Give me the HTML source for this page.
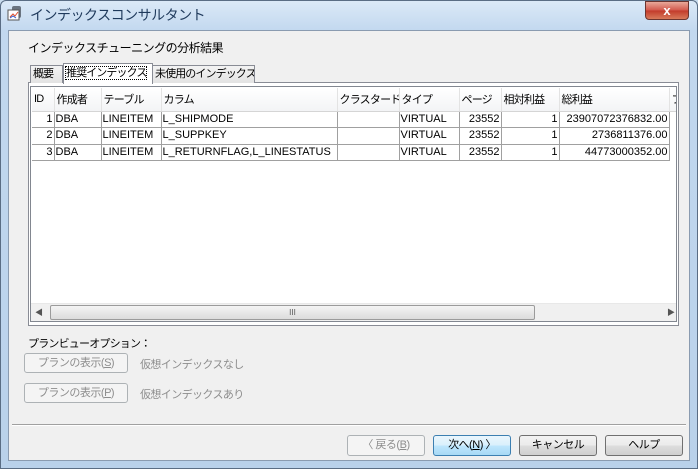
<!DOCTYPE html>
<html><head><meta charset="utf-8"><style>
*{margin:0;padding:0;box-sizing:border-box}
body{width:698px;height:469px;overflow:hidden;font-family:"Liberation Sans","Noto Sans CJK JP",sans-serif;font-size:12px;color:#000;background:#c9dcee;position:relative}
.a{position:absolute;white-space:nowrap}
.frame{left:0;top:0;width:698px;height:469px;background:linear-gradient(180deg,#dbe9f7 0,#c2d8ef 30px,#b9d1ea 100%);border:1px solid #5a6d84;border-radius:6px 6px 0 0}
.client{left:8px;top:30px;width:682px;height:431px;background:#f0f0f0;border:1px solid #8a9bb0}
.btn{border:1px solid #707070;border-radius:3px;background:linear-gradient(#f2f2f2,#ebebeb 50%,#dddddd 51%,#cfcfcf);text-align:center;line-height:18px;font-size:11px;letter-spacing:-0.5px}
.dis{border-color:#adb2b5;background:#f4f4f4;color:#8d8d8d}
.tab{top:65px;height:18px;border:1px solid #898c95;border-bottom:none;background:linear-gradient(#f3f3f3,#e3e3e3);font-size:11px;line-height:16px;padding:0 2px;letter-spacing:-0.9px;overflow:hidden}
table{border-collapse:collapse;font-size:11px;table-layout:fixed;width:667px}
td{height:16.5px;border-right:1px solid #a0a0a0;border-bottom:1px solid #a0a0a0;padding:0 1px;white-space:nowrap;line-height:15px;overflow:hidden}
th{height:23px;font-weight:normal;text-align:left;padding:0 2px;border-right:1px solid #e3e3e3;background:linear-gradient(#fff,#f3f4f6);border-bottom:1px solid #d5d5d5;white-space:nowrap;overflow:hidden;letter-spacing:-0.8px}
.r{text-align:right}
</style></head><body>
<div class="a frame"></div>
<svg class="a" style="left:7px;top:5px" width="18" height="18"><rect x="5" y="1" width="9" height="12" rx="2" fill="#6a7480"/><rect x="1" y="5" width="11" height="10" fill="#fff" stroke="#555"/><path d="M3 12 L6 9 L8 11 L11 7" stroke="#e05030" fill="none"/><path d="M3 13 L6 11 L9 13" stroke="#3060d0" fill="none"/></svg>
<div class="a" style="left:30px;top:5px;font-size:14px;color:#1e395b;letter-spacing:-0.5px">インデックスコンサルタント</div>
<div class="a" style="left:645px;top:1px;width:44px;height:19px;border:1px solid #6b3530;border-radius:0 0 4px 4px;background:linear-gradient(#e9a99a,#d2564a 50%,#c23a2a 51%,#d87a5a);color:#fff;text-align:center;font-weight:bold;font-size:13px;line-height:17px">x</div>
<div class="a client"></div>
<div class="a" style="left:28px;top:39px;letter-spacing:-0.5px">インデックスチューニングの分析結果</div>
<div class="a" style="left:28px;top:82px;width:651px;height:244px;border:1px solid #898c95;background:#fff"></div>
<div class="a tab" style="left:30px;width:33px">概要</div>
<div class="a tab" style="left:152px;width:103px">未使用のインデックス</div>
<div class="a tab" style="left:63px;top:63px;height:21px;width:90px;background:#fff;line-height:18px"><span style="outline:1px dotted #000">推奨インデックス</span></div>
<div class="a" style="left:30px;top:86px;width:647px;height:236px;border:1px solid #828790;background:#fff;overflow:hidden">
<table style="position:absolute;left:1px;top:1px">
<colgroup><col style="width:22px"><col style="width:47px"><col style="width:60px"><col style="width:176px"><col style="width:62px"><col style="width:60px"><col style="width:42px"><col style="width:58px"><col style="width:110px"><col style="width:30px"></colgroup>
<tr><th>ID</th><th>作成者</th><th>テーブル</th><th>カラム</th><th>クラスタード</th><th>タイプ</th><th>ページ</th><th>相対利益</th><th>総利益</th><th>フ</th></tr>
<tr><td class="r">1</td><td>DBA</td><td>LINEITEM</td><td>L_SHIPMODE</td><td></td><td>VIRTUAL</td><td class="r">23552</td><td class="r">1</td><td class="r">23907072376832.00</td><td style="border:none"></td></tr>
<tr><td class="r">2</td><td>DBA</td><td>LINEITEM</td><td>L_SUPPKEY</td><td></td><td>VIRTUAL</td><td class="r">23552</td><td class="r">1</td><td class="r">2736811376.00</td><td style="border:none"></td></tr>
<tr><td class="r">3</td><td>DBA</td><td>LINEITEM</td><td>L_RETURNFLAG,L_LINESTATUS</td><td></td><td>VIRTUAL</td><td class="r">23552</td><td class="r">1</td><td class="r">44773000352.00</td><td style="border:none"></td></tr>
</table>
<div class="a" style="left:0;top:216px;width:645px;height:18px;background:#f0f0f0;border-top:1px solid #e8e8e8"></div>
<div class="a" style="left:4px;top:220px;font-size:8px;color:#555">◀</div>
<div class="a" style="left:636px;top:220px;font-size:8px;color:#555">▶</div>
<div class="a" style="left:19px;top:218px;width:485px;height:15px;border:1px solid #9b9b9b;border-radius:2px;background:linear-gradient(#f4f4f4,#dcdcdc);text-align:center;font-size:8px;line-height:13px;color:#555">III</div>
</div>
<div class="a" style="left:28px;top:335px;font-size:11px;letter-spacing:-0.8px">プランビューオプション：</div>
<div class="a btn dis" style="left:24px;top:353px;width:104px;height:20px">プランの表示(<u>S</u>)</div>
<div class="a" style="left:140px;top:356px;font-size:11px;color:#8d8d8d;letter-spacing:-0.6px">仮想インデックスなし</div>
<div class="a btn dis" style="left:24px;top:383px;width:104px;height:20px">プランの表示(<u>P</u>)</div>
<div class="a" style="left:140px;top:386px;font-size:11px;color:#8d8d8d;letter-spacing:-0.6px">仮想インデックスあり</div>
<div class="a" style="left:12px;top:424px;width:674px;height:2px;border-top:1px solid #a0a0a0;border-bottom:1px solid #fff"></div>
<div class="a btn dis" style="left:347px;top:435px;width:78px;height:21px">〈 戻る(<u>B</u>)</div>
<div class="a btn" style="left:433px;top:435px;width:78px;height:21px;border-color:#3c7fb1;background:linear-gradient(#eaf6fd,#d9f0fc 50%,#bee6fd 51%,#a7d9f5)">次へ(<u>N</u>) 〉</div>
<div class="a btn" style="left:519px;top:435px;width:78px;height:21px">キャンセル</div>
<div class="a btn" style="left:605px;top:435px;width:78px;height:21px">ヘルプ</div>
</body></html>
